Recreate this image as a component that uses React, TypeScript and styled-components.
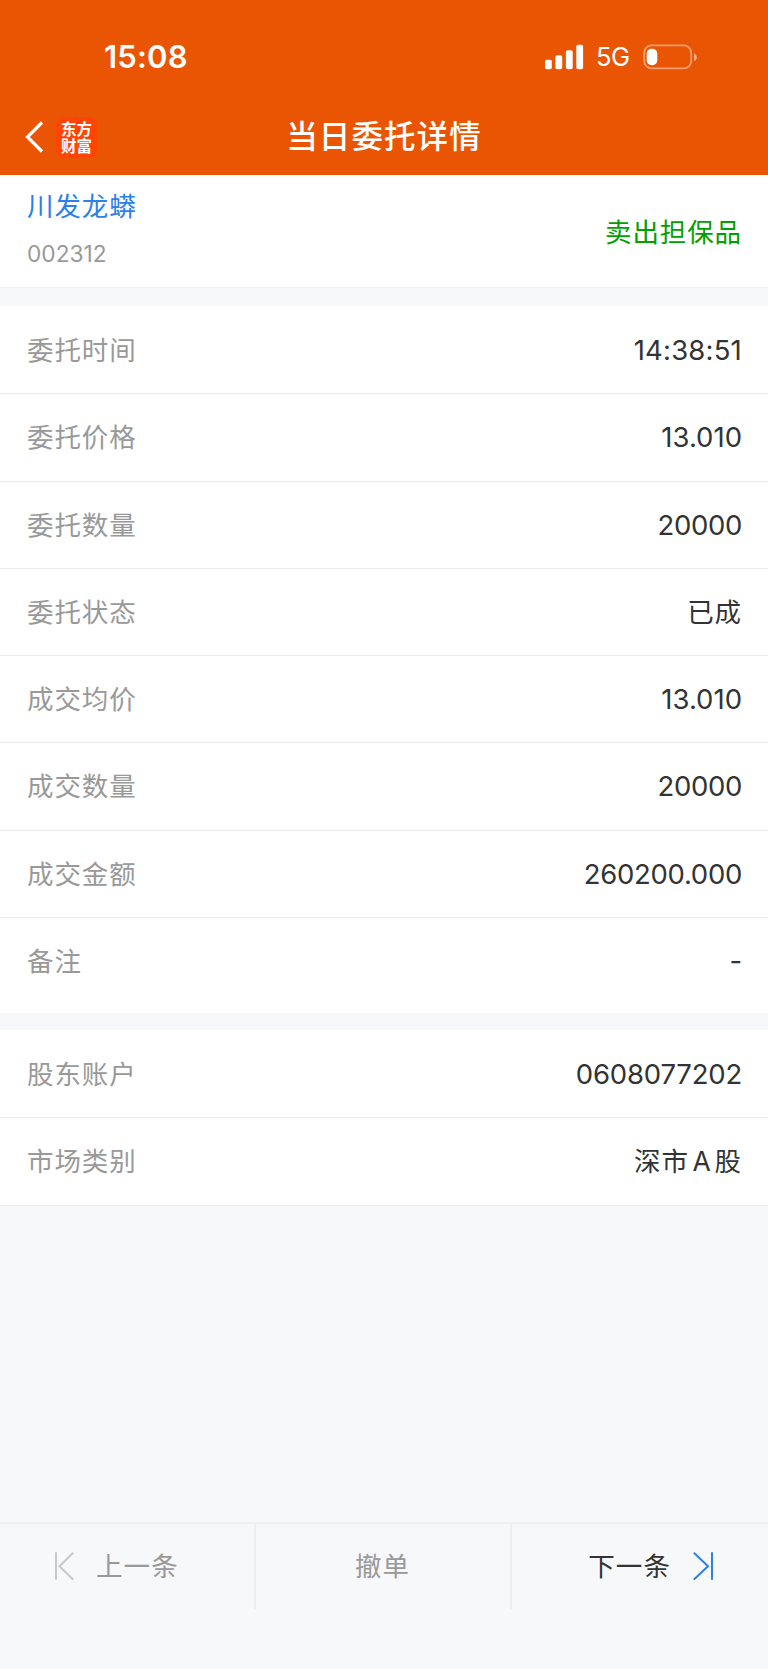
import React from "react";
import styled, { createGlobalStyle } from "styled-components";

const GlobalStyle = createGlobalStyle`
  * { box-sizing: border-box; }
  html, body { margin: 0; padding: 0; background: #f6f8fa; }
  body {
    font-family: Inter, "Noto Sans CJK SC", sans-serif;
    color: #333;
  }
`;

const Page = styled.div`
  width: 100%;
  min-height: 1669px;
  display: flex;
  flex-direction: column;
  background: #f6f8fa;
`;

const Header = styled.header`
  height: 175px;
  background: #ea5504;
  color: #fff;
  flex: none;
`;

const StatusBar = styled.div`
  height: 115px;
  padding: 0 71px 2px 104px;
  display: flex;
  align-items: center;
  justify-content: space-between;
`;

const Clock = styled.span`
  font-size: 31px;
  font-weight: 600;
  line-height: 36px;
  letter-spacing: 0.2px;
`;

const StatusIcons = styled.div`
  display: flex;
  align-items: center;
  height: 26px;
`;

const Network = styled.span`
  font-size: 25.5px;
  line-height: 26px;
  letter-spacing: -0.5px;
  width: 48px;
  padding-left: 12px;
  margin-right: 11px;
`;

const NavBar = styled.div`
  height: 44px;
  padding: 0 24px;
  display: grid;
  grid-template-columns: 1fr auto 1fr;
  align-items: center;
`;

const NavLeft = styled.div`
  display: flex;
  align-items: center;
  gap: 12px;
`;

const AppLogo = styled.div`
  width: 41px;
  height: 41px;
  border-radius: 8px;
  background: #ff4403;
  font-family: "Noto Sans CJK SC", sans-serif;
  font-weight: 700;
  font-size: 15.5px;
  line-height: 17px;
  text-align: center;
  padding-top: 3px;
`;

const Title = styled.h1`
  margin: 0;
  font-size: 31.5px;
  font-weight: 500;
  line-height: 44px;
  letter-spacing: 1.1px;
`;

const Summary = styled.section`
  height: 113px;
  padding: 0 26px 0 27px;
  display: flex;
  align-items: center;
  justify-content: space-between;
  background: #fff;
  border-bottom: 1px solid #f0f1f3;
`;

const StockName = styled.div`
  font-size: 26.5px;
  line-height: 36px;
  letter-spacing: 0.9px;
  color: #2b80ea;
`;

const StockCode = styled.div`
  margin-top: 12px;
  font-size: 22.7px;
  line-height: 36px;
  color: #999;
`;

const Stock = styled.div`
  height: 100%;
  padding-top: 13px;
`;

const Side = styled.div`
  padding-top: 2px;
  font-size: 26.5px;
  line-height: 36px;
  letter-spacing: 0.9px;
  color: #00a000;
`;

const Group = styled.section<{ $top: number; $bottom?: number }>`
  margin-top: ${(p) => p.$top}px;
  padding-top: 1px;
  padding-bottom: ${(p) => p.$bottom ?? 0}px;
  background: #fff;
`;

const Row = styled.div<{ $last?: boolean }>`
  height: 87.25px;
  padding: 0 26px 0 27px;
  display: flex;
  align-items: center;
  justify-content: space-between;
  border-bottom: ${(p) => (p.$last ? 0 : 1)}px solid #ebecee;
`;

const Label = styled.span`
  font-size: 26.5px;
  line-height: 36px;
  letter-spacing: 0.9px;
  color: #999;
`;

const Value = styled.span<{ $cjk?: boolean; $tracking?: number }>`
  font-size: ${(p) => (p.$cjk ? 26.5 : 27.5)}px;
  line-height: 36px;
  letter-spacing: ${(p) => (p.$cjk ? 0.9 : p.$tracking ?? -0.2)}px;
  color: #333;
`;

const Latin = styled.span`
  margin: 0 3px 0 3.5px;
`;

const Footer = styled.footer`
  margin-top: auto;
  height: 147px;
  border-top: 2px solid #eeeff0;
`;

const Actions = styled.div`
  height: 85px;
  display: grid;
  grid-template-columns: 256px 256px 256px;
`;

const Action = styled.button<{ $active?: boolean; $align?: "start" | "end" }>`
  border: 0;
  border-right: ${(p) => (p.$active ? 0 : 2)}px solid #eeeff0;
  background: transparent;
  padding: 0 55px 2px 54px;
  display: flex;
  align-items: center;
  justify-content: ${(p) => (p.$align ? `flex-${p.$align}` : "center")};
  gap: 22px;
  font-family: inherit;
  font-size: 26.5px;
  line-height: 36px;
  letter-spacing: 1.1px;
  color: ${(p) => (p.$active ? "#333" : "#999")};
`;

type Item = { label: string; value: React.ReactNode; cjk?: boolean; tracking?: number };

const orderRows: Item[] = [
  { label: "委托时间", value: "14:38:51", tracking: 0.2 },
  { label: "委托价格", value: "13.010", tracking: 0 },
  { label: "委托数量", value: "20000", tracking: -0.35 },
  { label: "委托状态", value: "已成", cjk: true },
  { label: "成交均价", value: "13.010", tracking: 0 },
  { label: "成交数量", value: "20000", tracking: -0.35 },
  { label: "成交金额", value: "260200.000", tracking: -0.3 },
  { label: "备注", value: "-" },
];

const accountRows: Item[] = [
  { label: "股东账户", value: "0608077202", tracking: -0.2 },
  { label: "市场类别", value: <>深市<Latin>A</Latin>股</>, cjk: true },
];

const Signal = () => (
  <svg width="39" height="26" viewBox="0 0 39 26" fill="#fff">
    <rect x="0" y="15.8" width="6.8" height="9.4" rx="1.8" />
    <rect x="10.4" y="11.3" width="6.8" height="13.9" rx="1.8" />
    <rect x="20.9" y="6.3" width="6.8" height="18.9" rx="1.8" />
    <rect x="31.3" y="0.7" width="6.8" height="24.5" rx="1.8" />
  </svg>
);

const Battery = () => (
  <svg width="54" height="26" viewBox="0 0 54 26">
    <rect x="1.2" y="1.4" width="47" height="23" rx="7.5" fill="none" stroke="#fff" strokeOpacity="0.42" strokeWidth="1.9" />
    <path d="M51 9.2c1.8.8 2.8 2.2 2.8 4s-1 3.2-2.8 4z" fill="#fff" fillOpacity="0.5" />
    <rect x="3.7" y="4.8" width="10.6" height="16.4" rx="4.8" fill="#fff" />
  </svg>
);

const Back = () => (
  <svg width="20" height="34" viewBox="0 0 20 34" fill="none" stroke="#fff" strokeWidth="3.2">
    <path d="M18 2.5 3.5 17 18 31.5" />
  </svg>
);

const SkipIcon = ({ next }: { next?: boolean }) => (
  <svg width="20" height="28" viewBox="0 0 20 28" fill="none" stroke={next ? "#2b80ea" : "#c8c9ca"} strokeWidth="2" strokeLinecap="round">
    {next ? <path d="M1.4 1.3 15 14.2 1.4 27M19 1v26" /> : <path d="M18.6 1.3 5.5 14.2 18.6 27M2 1v26" />}
  </svg>
);

const Rows = ({ items, openEnd }: { items: Item[]; openEnd?: boolean }) => (
  <>
    {items.map((item, i) => (
      <Row key={item.label} $last={openEnd && i === items.length - 1}>
        <Label>{item.label}</Label>
        <Value $cjk={item.cjk} $tracking={item.tracking}>{item.value}</Value>
      </Row>
    ))}
  </>
);

export default function App() {
  return (
    <Page>
      <GlobalStyle />
      <Header>
        <StatusBar>
          <Clock>15:08</Clock>
          <StatusIcons>
            <Signal />
            <Network>5G</Network>
            <Battery />
          </StatusIcons>
        </StatusBar>
        <NavBar>
          <NavLeft>
            <Back />
            <AppLogo>东方<br />财富</AppLogo>
          </NavLeft>
          <Title>当日委托详情</Title>
        </NavBar>
      </Header>
      <Summary>
        <Stock>
          <StockName>川发龙蟒</StockName>
          <StockCode>002312</StockCode>
        </Stock>
        <Side>卖出担保品</Side>
      </Summary>
      <Group $top={18} $bottom={8}>
        <Rows items={orderRows} openEnd />
      </Group>
      <Group $top={17}>
        <Rows items={accountRows} />
      </Group>
      <Footer>
        <Actions>
          <Action $align="start">
            <SkipIcon />
            上一条
          </Action>
          <Action>撤单</Action>
          <Action $active $align="end">
            下一条
            <SkipIcon next />
          </Action>
        </Actions>
      </Footer>
    </Page>
  );
}
